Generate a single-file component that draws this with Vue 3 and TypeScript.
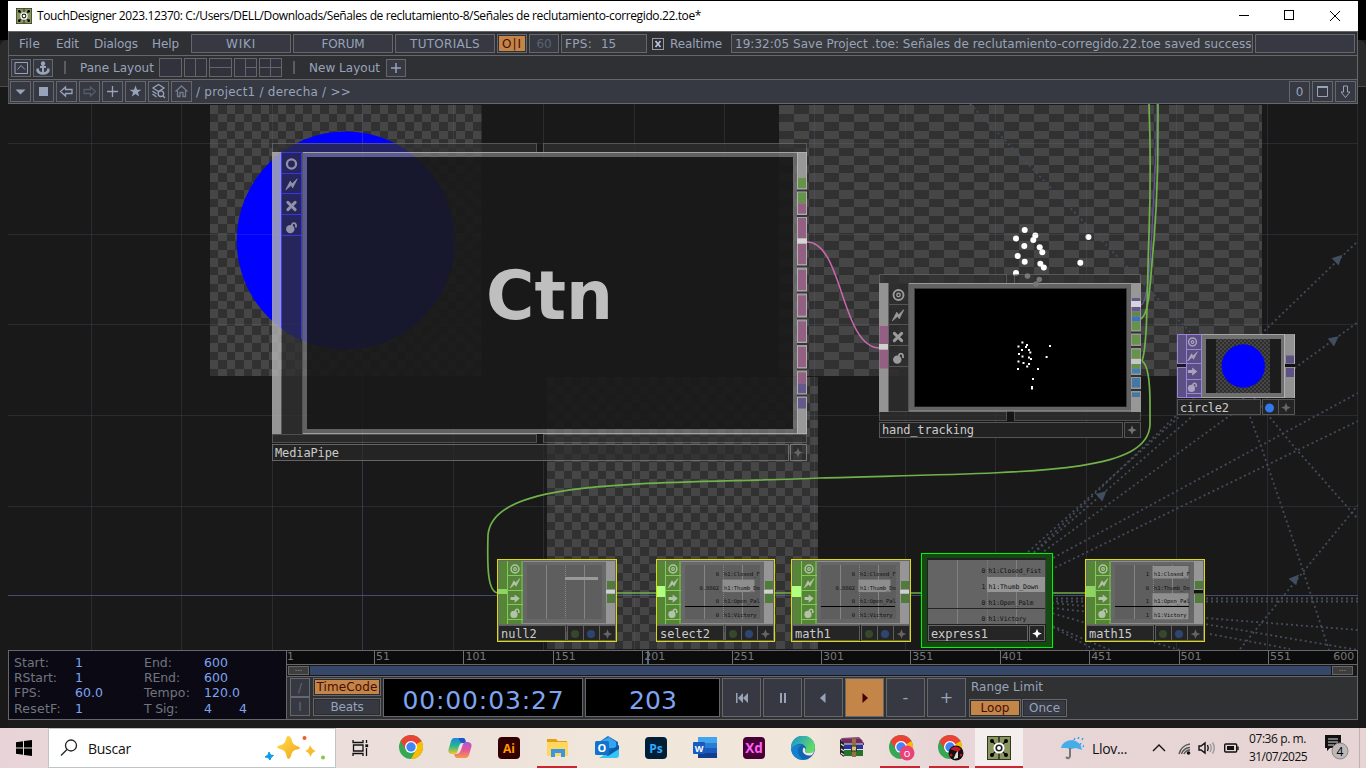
<script setup lang="ts">
interface Checker { id: string; x: number; y: number; w: number; h: number; pw: number; cw: number }
interface Row { v: string; label: string; hi: boolean }
interface Chop { name: string; x: number; rows: Row[]; hw: number; socket: string; hot: boolean }

const vFit = {
  mounted(el: HTMLElement, binding: { value: number }) {
    const range = document.createRange()
    range.selectNodeContents(el)
    const width = range.getBoundingClientRect().width
    const count = (el.textContent || '').length
    if (count > 0) el.style.letterSpacing = `${(binding.value - width) / count}px`
  },
}

const menus = [
  { t: 'File', w: 21, c: 37 }, { t: 'Edit', w: 23, c: 38 },
  { t: 'Dialogs', w: 44, c: 58 }, { t: 'Help', w: 27, c: 39 },
]
const links = [{ t: 'WIKI', w: 30 }, { t: 'FORUM', w: 43 }, { t: 'TUTORIALS', w: 70 }]
const layouts = [
  '', 'M11.5 0V19', 'M0 9.5H23', 'M11.5 0V19M11.5 9.5H23', 'M11.5 0V19M0 9.5H23',
]
const tools = [
  { d: 'M5 8H15L10 13Z', fill: true },
  { d: 'M5.5 5.500H14.500V14.500H5.500Z', fill: true },
  { d: 'M4 10L9 5.500V8H15.500V12H9V14.500Z', fill: false },
  { d: 'M16 10L11 5.500V8H4.500V12H11V14.500Z', fill: false, dim: true },
  { d: 'M10 4.500V15.500M4.500 10H15.500', fill: false },
  { d: 'M10 4L11.500 8.200H16L12.400 10.800L13.700 15L10 12.500L6.300 15L7.600 10.800L4 8.200H8.500Z', fill: true },
  { d: 'M10 3L15.500 6.500L10 10L4.500 6.500ZM4 9.500L8 12.500M4 12.500L8 15.500M16.500 16.500L14.300 14.300M15.200 12.200A2.800 2.800 0 1 1 9.600 12.200A2.800 2.800 0 1 1 15.200 12.200', fill: false },
  { d: 'M4 10L10 4.500L16 10M6 9V15H8.500V11H11.500V15H14V9', fill: false, mid: true },
]
const checkers: Checker[] = [
  { id: 'ck1', x: 210, y: 105, w: 271.500, h: 271, pw: 17, cw: 8 },
  { id: 'ck2', x: 779, y: 105, w: 483, h: 271, pw: 30, cw: 15 },
  { id: 'ck3', x: 547, y: 377, w: 271, h: 272, pw: 17, cw: 8 },
]
const vLines = [91.5, 181.5, 272.5, 453.5, 543.5, 634.5, 724.5, 814.5, 905.5, 995.5, 1086.5, 1176.5, 1267.5, 1357.5]
const hLines = [143.5, 234.5, 324.5, 415.5, 506.5]
const dotted = [
  'M970 104L1192 334', 'M1030 556L1358 241', 'M1032 560L1358 322', 'M1040 565L1358 393', 'M1046 572L1358 421',
  'M1028 552L1180 416', 'M1034 553L1195 414', 'M1243 398L1262 449L1293 540L1329 650', 'M1254 398L1296 449L1358 519',
  'M1240 649L1358 505', 'M1046 598.500H1358', 'M1046 601.500H1358', 'M1052 603L1205 618L1358 630',
  'M1052 608L1205 624L1358 650', 'M1048 612L1180 650', 'M1048 624L1110 650', 'M1040 620L1095 650', 'M1000 624L1030 650',
  'M1210 634L1290 649',
]
const arrows = ['translate(1338 259) rotate(-44)', 'translate(1334 340) rotate(-38)', 'translate(1102 495) rotate(-42)', 'translate(1295 579) rotate(-50)']
const mpSockets = [
  { y: 178, h: 10, c: '#66934a' }, { y: 192.5, h: 11, c: '#66934a' }, { y: 203.5, h: 10, c: '#935f83' },
  { y: 218, h: 20, c: '#935f83' }, { y: 244, h: 20, c: '#935f83' }, { y: 270, h: 20, c: '#935f83' },
  { y: 295.5, h: 20, c: '#935f83' }, { y: 321.5, h: 20, c: '#935f83' }, { y: 347, h: 20, c: '#935f83' },
  { y: 372.5, h: 11, c: '#935f83' }, { y: 383.5, h: 10, c: '#65598c' }, { y: 398, h: 10.500, c: '#65598c' },
]
const mpGaps = [188.5, 214, 264.5, 290.5, 316.5, 342, 367.5, 393.5]
const htSockets = [
  { y: 298, h: 3, c: '#65598c' }, { y: 307, h: 4.500, c: '#65598c' }, { y: 312, h: 4.500, c: '#5e8a43' },
  { y: 316.5, h: 5, c: '#4070c0' }, { y: 321.5, h: 8.500, c: '#66934a' }, { y: 335, h: 9.500, c: '#66934a' },
  { y: 349.5, h: 9, c: '#66934a' }, { y: 364, h: 4.500, c: '#66934a' }, { y: 368.5, h: 5, c: '#4580b0' },
  { y: 378, h: 9.500, c: '#4577a5' }, { y: 392.5, h: 4.500, c: '#4577a5' },
]
const htGaps = [331, 345.5, 374.5, 388.5]
const bigDots = [
  [1024.7, 230], [1016, 238.5], [1035.3, 235.5], [1033.3, 240], [1024.3, 246], [1017.7, 256], [1039.7, 247.3], [1042.3, 252.3],
  [1024.7, 261.7], [1040.3, 263.7], [1043.8, 267.5], [1016, 273], [1088.5, 237], [1080.3, 262.8],
]
const dimDots = [[1027.5, 276], [1039.3, 279.5], [1036, 284]]
const smallDots = [
  [1022.4, 342.5], [1018.5, 346.5], [1027, 345], [1026, 347], [1022, 350], [1019, 354], [1029, 350], [1030.3, 352.5],
  [1022.5, 356.5], [1029, 357.5], [1031, 359], [1018.5, 361.5], [1023.5, 363], [1029, 364], [1027.2, 366.5], [1018, 369],
  [1050, 346], [1046.6, 357], [1038, 369], [1033, 379], [1032, 387], [1032, 388.5],
]
const mk = (vals: string[], hi: number[]): Row[] =>
  ['h1:Closed_F', 'h1:Thumb_Do', 'h1:Open_Pal', 'h1:Victory'].map((label, i) => ({ v: vals[i], label, hi: hi.includes(i) }))
const chops: Chop[] = [
  { name: 'null2', x: 497, rows: [], hw: 0, socket: '#8ed461', hot: false },
  { name: 'select2', x: 655, rows: mk(['0', '0.8802', '0', '0'], [1]), hw: 32, socket: '#b0ff80', hot: true },
  { name: 'math1', x: 791, rows: mk(['0', '0.8802', '0', '0'], [1]), hw: 32, socket: '#b0ff80', hot: true },
  { name: 'math15', x: 1085, rows: mk(['1', '0', '1', '1'], [0, 2, 3]), hw: 36, socket: '#8ed461', hot: false },
]
const exRows = [
  { v: '0', label: 'h1:Closed_Fist', w: 53 }, { v: '1', label: 'h1:Thumb_Down', w: 50 },
  { v: '0', label: 'h1:Open_Palm', w: 45 }, { v: '0', label: 'h1:Victory', w: 38 },
]
const params = [
  ['Start:', 35, '1', 6, 'End:', 28, '600', 24, ''],
  ['RStart:', 43, '1', 6, 'REnd:', 36, '600', 24, ''],
  ['FPS:', 27, '60.0', 28, 'Tempo:', 46, '120.0', 36, ''],
  ['ResetF:', 47, '1', 6, 'T Sig:', 34, '4', 8, '4'],
] as [string, number, string, number, string, number, string, number, string][]
const ticks = ['1', '51', '101', '151', '201', '251', '301', '351', '401', '451', '501', '551']
const apps = ['chrome', 'copilot', 'ai', 'folder', 'outlook', 'ps', 'word', 'xd', 'edge', 'rar', 'chromeO', 'chromeR', 'td']
const running = ['folder', 'chromeO', 'chromeR', 'td']
</script>

<template>
  <div class="screen">
    <svg class="defs" width="0" height="0">
      <symbol id="td" viewBox="0 0 24 24">
        <rect width="24" height="24" fill="#33371f" /><rect x="1" y="1" width="22" height="22" fill="#8a9660" />
        <path d="M4 4L20 20M20 4L4 20M12 1V23" stroke="#111" stroke-width="1.2" />
        <circle cx="5" cy="5" r="2" /><circle cx="19" cy="5" r="2" /><circle cx="5" cy="19" r="2" /><circle cx="19" cy="19" r="2" />
        <circle cx="12" cy="12" r="5.500" fill="#fff" /><circle cx="12" cy="12" r="2.800" fill="none" stroke="#222" stroke-width="1.600" />
      </symbol>
      <symbol id="eye" viewBox="0 0 16 16"><circle cx="8" cy="8" r="5.700" fill="none" stroke="currentColor" stroke-width="2.200" /><circle cx="8" cy="8" r="2" fill="none" stroke="currentColor" stroke-width="1.600" /></symbol>
      <symbol id="ring" viewBox="0 0 16 16"><circle cx="8" cy="8" r="5.600" fill="none" stroke="currentColor" stroke-width="2.800" /></symbol>
      <symbol id="bolt" viewBox="0 0 16 16"><path d="M1 14.500L6.500 4L8.800 7.200L15 1L9.500 12L7.500 9Z" fill="currentColor" stroke="currentColor" /></symbol>
      <symbol id="cross" viewBox="0 0 16 16"><path d="M3.500 3.500L12.500 12.500M12.500 3.500L3.500 12.500" stroke="currentColor" stroke-width="3.600" stroke-linecap="round" /></symbol>
      <symbol id="arrow" viewBox="0 0 16 16"><path d="M1.500 5.800H7.500V2L15 8L7.500 14V10.200H1.500Z" fill="currentColor" /></symbol>
      <symbol id="lock" viewBox="0 0 16 16"><circle cx="6.500" cy="10" r="5.200" fill="currentColor" /><path d="M8.500 6V4.500A2.600 2.600 0 0 1 13.500 4.500V8" fill="none" stroke="currentColor" stroke-width="2.200" /></symbol>
      <symbol id="spark" viewBox="0 0 16 16"><path d="M8 1L10 6L15 8L10 10L8 15L6 10L1 8L6 6Z" fill="currentColor" /></symbol>
    </svg>

    <div class="desk">
      <div class="backdrop"></div>
      <div class="window">
        <header class="title">
          <svg width="16" height="16"><use href="#td" /></svg>
          <span v-fit="664" class="caption">TouchDesigner 2023.12370: C:/Users/DELL/Downloads/Señales de reclutamiento-8/Señales de reclutamiento-corregido.22.toe*</span>
          <svg class="wbtns" width="130" height="30" fill="none" stroke="#000"><path d="M11 14.500H21M102 10L112 20M112 10L102 20" /><rect x="56.500" y="9.500" width="9" height="9" /></svg>
        </header>

        <div class="bar row1">
          <div v-for="m in menus" :key="m.t" class="menu" :style="{ width: m.c + 'px' }"><span v-fit="m.w">{{ m.t }}</span></div>
          <div v-for="l in links" :key="l.t" class="box link"><span v-fit="l.w">{{ l.t }}</span></div>
          <div class="box oi"><span v-fit="20">O|I</span></div>
          <div class="box sixty"><span v-fit="15">60</span></div>
          <div class="box fps"><span v-fit="27">FPS:</span><span v-fit="15">15</span></div>
          <div class="check"><svg width="12" height="12"><rect x=".5" y=".5" width="11" height="11" fill="#2a2d35" stroke="#9a9a9a" /><path d="M3.500 3L8.500 9M8.500 3L3.500 9" stroke="#b9c3d8" stroke-width="1.800" /></svg><span v-fit="52">Realtime</span></div>
          <div class="box msg"><span v-fit="516.500">19:32:05 Save Project .toe: Señales de reclutamiento-corregido.22.toe saved success</span></div>
          <div class="box last"></div>
        </div>

        <div class="bar row2">
          <div class="box sq"><svg width="18" height="16" fill="none" stroke="#98a3ba"><path d="M3 2.500H15.500V13.500H3ZM5.500 9.500L9 5.500L13 9.500" /></svg></div>
          <div class="box sq"><svg width="18" height="16" fill="none" stroke="#98a3ba" stroke-width="2"><circle cx="9" cy="3.500" r="1.200" fill="#98a3ba" /><path d="M9 5V13M6 7H12M2.500 9.500H5M13 9.500H15.500" /><path d="M3.500 10C4.500 14.500 13.500 14.500 14.500 10" stroke-width="2.800" /></svg></div>
          <i class="sep s1"></i><span v-fit="74" class="pane">Pane Layout</span>
          <svg v-for="(d, i) in layouts" :key="i" class="lay" width="23" height="19" fill="none" stroke="#63656b"><rect x=".5" y=".5" width="22" height="18" fill="#30333b" /><path :d="d" /></svg>
          <i class="sep s2"></i><span v-fit="71" class="newl">New Layout</span>
          <div class="box sq"><svg width="18" height="16" stroke="#98a3ba" stroke-width="1.500"><path d="M9 3V13M4 8H14" /></svg></div>
        </div>

        <div class="bar row3">
          <div v-for="(t, i) in tools" :key="i" class="box tool">
            <svg width="19" height="19" viewBox=".5 .5 19 19" :fill="t.fill ? '#98a3ba' : 'none'" :stroke="t.fill ? 'none' : t.dim ? '#555b69' : t.mid ? '#747d90' : '#98a3ba'" stroke-width="1.300"><path :d="t.d" /></svg>
          </div>
          <span v-fit="155" class="path">/ project1 / derecha / &gt;&gt;</span>
          <div class="box tool"><span>0</span></div>
          <div class="box tool"><svg width="19" height="19" fill="none" stroke="#98a3ba"><path d="M4.500 5V14.500H14.500V5M4 5.500H15" /><path d="M4 5H15" stroke-width="2" /></svg></div>
          <div class="box tool"><svg width="19" height="19" fill="none" stroke="#98a3ba"><path d="M7.500 4H11.500V10H14L9.500 15.500L5 10H7.500Z" /></svg></div>
        </div>

        <svg class="network" width="1350" height="546" viewBox="8 104 1350 546">
          <defs>
            <pattern v-for="c in checkers" :id="c.id" :key="c.id" patternUnits="userSpaceOnUse" :x="c.x" :y="c.y" :width="c.pw" height="17">
              <g shape-rendering="crispEdges"><rect :width="c.pw" height="17" fill="#313131" /><rect :width="c.cw" height="9" fill="#464646" /><rect :x="c.cw" y="9" :width="c.pw - c.cw" height="8" fill="#464646" /></g>
            </pattern>
            <pattern id="tiny" patternUnits="userSpaceOnUse" width="4" height="4"><rect width="4" height="4" fill="#2e2e2e" /><path d="M0 0H2V2H0ZM2 2H4V4H2Z" fill="#464646" /></pattern>
            <clipPath id="chopClip"><rect x="27" y="563" width="78" height="60" /></clipPath>
          </defs>
          <rect x="8" y="104" width="1350" height="546" fill="#191919" />
          <rect v-for="c in checkers" :key="c.id" :x="c.x" :y="c.y" :width="c.w" :height="c.h" :fill="`url(#${c.id})`" />
          <circle cx="345.700" cy="240.500" r="109" fill="#00f" />
          <circle v-for="d in bigDots" :key="d.join()" :cx="d[0]" :cy="d[1]" r="3" fill="#fff" />
          <g stroke="#6d6d90" stroke-opacity=".2">
            <path v-for="x in vLines" :key="x" :d="`M${x} 104V650`" /><path v-for="y in hLines" :key="y" :d="`M8 ${y}H1358`" />
          </g>
          <path d="M362.500 104V650" stroke="#6262a0" stroke-opacity=".4" /><path d="M8 595.500H1358" stroke="#5d5da0" stroke-opacity=".7" />

          <g fill="none" stroke="#434c5b" stroke-width="1.800" stroke-dasharray="2 3"><path v-for="d in dotted" :key="d" :d="d" /></g>
          <path v-for="a in arrows" :key="a" d="M-4 -5L6 0L-4 5Z" :transform="a" fill="#414e5f" />

          <path d="M807 242C843 242 841 348 880 348" fill="none" stroke="#cb68ad" stroke-width="1.500" />
          <path d="M1141 305C1147 303 1150 275 1152.500 220C1155 165 1157 150 1157 104" fill="none" stroke="#65539c" stroke-width="1.300" />
          <g fill="none" stroke="#70b14a" stroke-width="1.700">
            <path d="M1141 319C1150 313 1150 280 1154 240C1158 190 1158 150 1158 104" />
            <path d="M1142 361C1148 345 1147 280 1149 235C1150.500 190 1150 130 1149 104" />
            <path d="M1142 361C1147 364 1150 380 1150 404V425C1147 475 1030 472 820 478C650 485 493 477 488 535C487 570 488 592 498 593" />
            <path d="M616 593H657M774 593H792M910 593H928M1045 593H1086" />
          </g>

          <!-- MediaPipe -->
          <g class="node">
            <g fill="#303030" fill-opacity=".75" stroke="#888" stroke-opacity=".45">
              <rect x="272.500" y="143.500" width="264" height="9" /><rect x="543.500" y="143.500" width="263" height="9" />
              <rect x="272.500" y="434.500" width="264" height="8" /><rect x="543.500" y="434.500" width="263" height="8" />
            </g>
            <rect x="282" y="152" width="20" height="282" fill="#303030" opacity=".79" />
            <path fill="#757575" fill-opacity=".79" fill-rule="evenodd" d="M302 152H797V434H302ZM307 157V429H793V157Z" />
            <rect x="307" y="157" width="486" height="272" fill="#191919" opacity=".91" />
            <rect x="272" y="152" width="9.500" height="282" fill="#b4b4b4" opacity=".8" />
            <rect x="797" y="152" width="10" height="282" fill="#989898" />
            <path d="M302 152.500H807M302 433.500H807M797.500 152V434M806.500 152V434" stroke="#bbb" stroke-opacity=".7" />
            <path d="M302.500 152V434" stroke="#555" />
            <path d="M282 173.500H301M282 193.500H301M282 214.500H301M282 235.500H301M281.500 152.500H301.500M281.500 153V328M301.500 153V339" stroke="#3939ff" stroke-opacity=".85" />
            <rect v-for="s in mpSockets" :key="s.y" x="798" :y="s.y" width="8" :height="s.h" :fill="s.c" />
            <g v-for="g in mpGaps" :key="g"><rect x="797" :y="g" width="10" height="3.500" fill="#ababab" /><rect x="797" :y="g + 1" width="10" height="2" fill="#383838" /></g>
            <rect x="797" y="238.500" width="10" height="5" fill="#d5d5d5" />
            <g color="#9090aa"><use href="#ring" x="285" y="157.500" width="13" height="13" /><use href="#bolt" x="285" y="178" width="13" height="13" /><use href="#cross" x="285" y="199.500" width="13" height="13" /><use href="#lock" x="285" y="220.500" width="13" height="14" /></g>
            <text x="486" y="319" class="big" textLength="127" lengthAdjust="spacingAndGlyphs">Ctn</text>
            <rect x="272.500" y="444.500" width="516" height="16" fill="#2b2b2b" fill-opacity=".65" stroke="#777" stroke-opacity=".8" /><rect x="790.500" y="444.500" width="16" height="16" fill="#2b2b2b" fill-opacity=".5" stroke="#777" />
            <use href="#spark" x="792.500" y="447" width="11" height="11" color="#666" />
            <text x="275" y="457" class="mono" textLength="64">MediaPipe</text>
          </g>

          <!-- hand_tracking -->
          <g>
            <g fill="#303030" fill-opacity=".75" stroke="#888" stroke-opacity=".45">
              <rect x="879.500" y="274.500" width="127" height="9" /><rect x="1014.500" y="274.500" width="126" height="9" />
              <rect x="879.500" y="411.500" width="127" height="9" /><rect x="1014.500" y="411.500" width="126" height="9" />
            </g>
            <rect x="1007" y="412" width="7" height="9" fill="#141414" />
            <rect x="888" y="283" width="21" height="128" fill="#2c2c2c" opacity=".9" />
            <rect x="909" y="283" width="222" height="128" fill="#636363" />
            <path d="M909 283.500H1141M909 411H1141" stroke="#999" />
            <rect x="914" y="288" width="213" height="119" fill="#3a3a3a" /><rect x="915" y="289" width="211" height="117.500" />
            <rect x="879" y="283" width="9.500" height="129" fill="#939393" /><rect x="879.500" y="326" width="8.500" height="18" fill="#935f83" /><rect x="879.500" y="350" width="8.500" height="18.500" fill="#935f83" /><rect x="879" y="344" width="9" height="5.500" fill="#d0d0d0" />
            <rect x="1131" y="283" width="10" height="129" fill="#979797" />
            <rect x="1131" y="301" width="10" height="6" fill="#d8d4de" /><rect x="1131" y="359" width="10" height="5" fill="#c7c7c7" />
            <rect v-for="s in htSockets" :key="s.y" x="1132" :y="s.y" width="8" :height="s.h" :fill="s.c" />
            <rect v-for="g in htGaps" :key="g" x="1131" :y="g + .5" width="10" height="2" fill="#333" />
            <circle v-for="d in dimDots" :key="d[0]" :cx="d[0]" :cy="d[1]" r="2.800" fill="#777" />
            <rect v-for="d in smallDots" :key="d.join()" :x="d[0] - 1" :y="d[1] - 1" width="2" height="2" fill="#fff" />
            <path d="M888 304.500H909M888 324.500H909M888 345.500H909M888 366.500H909M908.500 283V411" stroke="#555" />
            <g color="#9b9b9b"><use href="#eye" x="891.500" y="288" width="14" height="14" /><use href="#bolt" x="891.500" y="309" width="13" height="13" /><use href="#cross" x="891.500" y="330.500" width="13" height="13" /><use href="#lock" x="892" y="351" width="13" height="14" /></g>
            <rect x="879.500" y="422.500" width="243" height="15" fill="#222" stroke="#555" /><rect x="1124.500" y="422.500" width="16" height="15" fill="#222" stroke="#555" />
            <use href="#spark" x="1126.500" y="424.500" width="11" height="11" color="#707070" />
            <text x="882" y="434" class="mono" textLength="92">hand_tracking</text>
          </g>

          <!-- circle2 -->
          <g>
            <rect x="1177" y="334" width="118" height="64" fill="#707070" /><path d="M1201 334.500H1295M1201 397.500H1295" stroke="#a5a5a5" />
            <rect x="1206" y="339" width="75" height="54" fill="#1c1c1c" /><rect x="1216" y="339" width="54" height="54" fill="url(#tiny)" /><circle cx="1243.300" cy="366" r="21.700" fill="#00f" />
            <rect x="1285" y="334" width="10" height="64" fill="#929292" /><path d="M1284.500 334V398M1294.500 334V398" stroke="#b0b0b0" />
            <rect x="1286" y="355.500" width="8" height="8" fill="#5e5284" /><rect x="1286" y="368" width="8" height="9" fill="#5e5284" /><rect x="1285" y="364" width="10" height="3" fill="#111" />
            <rect x="1177" y="334" width="24" height="64" fill="#5b4f83" />
            <path d="M1177.500 334.500H1201.500V397.500H1177.500ZM1186.500 334V398M1186 349.500H1201M1186 363.500H1201M1186 379.500H1201M1186 393.500H1201" stroke="#9a86d6" fill="none" /><path d="M1177 363.500H1186M1177 367.500H1186" stroke="#9a86d6" /><rect x="1177" y="364" width="9" height="3" fill="#1a1a1a" />
            <g color="#aaa3bd"><use href="#eye" x="1187" y="336.500" width="11" height="11" /><use href="#bolt" x="1187" y="351" width="11" height="11" /><use href="#arrow" x="1187" y="366" width="11" height="11" /><use href="#lock" x="1187" y="381.500" width="11" height="11" /></g>
            <g fill="#242424" stroke="#555"><rect x="1177.500" y="399.500" width="83" height="15" /><rect x="1262.500" y="399.500" width="16" height="15" /><rect x="1278.500" y="399.500" width="16" height="15" /></g>
            <circle cx="1269.500" cy="408" r="4.500" fill="#3478ee" /><use href="#spark" x="1280.500" y="402" width="11" height="11" color="#666" />
            <text x="1180" y="412" class="mono" textLength="49">circle2</text>
          </g>

          <g v-for="n in chops" :key="n.name" :transform="`translate(${n.x} 0)`">
            <rect x="1" y="560" width="118" height="65" fill="#6b6b6b" fill-opacity=".94" />
            <rect x="30" y="565" width="75" height="54" fill="#5e5e5e" /><path d="M49.500 565V619M87.500 565V619" stroke="#858585" /><path d="M68.500 565V619" stroke="#858585" stroke-dasharray="1 1" />
            <rect v-if="!n.rows.length" x="68" y="577" width="33" height="3" fill="#999" />
            <g clip-path="url(#chopClip)">
              <g v-for="(r, i) in n.rows" :key="i">
                <rect v-if="r.hi" x="67.500" :y="566 + i * 13.600" :width="n.hw" height="12.500" fill="#8e8e8e" />
                <text x="64" :y="576 + i * 13.600" class="micro" text-anchor="end" :textLength="r.v.length * 3.250">{{ r.v }}</text>
                <text x="69" :y="576 + i * 13.600" class="micro" :textLength="r.label.length * 3.250">{{ r.label }}</text>
              </g>
              <path v-if="n.rows.length" d="M30 606.500H104" stroke="#000" />
            </g>
            <path d="M2 561.500H118M26 623.500H118" stroke="#8c8c8c" />
            <rect x="109" y="561" width="9" height="63" fill="#969696" /><rect x="110" y="581" width="8" height="8" fill="#517b3a" /><rect x="110" y="594" width="8" height="9" fill="#517b3a" /><rect x="109" y="590" width="9" height="3.500" :fill="n.name === 'math15' ? '#111' : '#d0d0d0'" />
            <rect x="2" y="561" width="24" height="63" fill="#568537" />
            <path d="M10.500 561V624M25 561V624M11 575.500H26M11 590.500H26M11 604.500H26M11 619.500H26" stroke="#84c75b" />
            <rect x="1" :y="n.hot || n.name === 'math15' ? 586 : 589" width="9" :height="n.hot || n.name === 'math15' ? 11 : 5" :fill="n.socket" />
            <g color="#b3c3a8"><use href="#eye" x="12.500" y="563.500" width="11" height="11" /><use href="#bolt" x="12.500" y="578" width="11" height="11" /><use href="#arrow" x="12.500" y="593" width="11" height="11" /><use href="#lock" x="12.500" y="607.500" width="11" height="11" /></g>
            <g fill="#252525" stroke="#5e5e5e"><rect x="1.500" y="625.500" width="67" height="15" /><rect x="70.500" y="625.500" width="16" height="15" /><rect x="86.500" y="625.500" width="16" height="15" /><rect x="102.500" y="625.500" width="16" height="15" /></g>
            <circle cx="78" cy="634" r="4" fill="#37472c" /><circle cx="94" cy="634" r="4" fill="#2e466f" /><use href="#spark" x="105" y="628.500" width="11" height="11" color="#656565" />
            <rect :x="n.name === 'select2' ? 1.500 : .5" y="559.500" :width="n.name === 'select2' ? 118 : 119" height="82" fill="none" stroke="#dedb0b" />
            <text :x="n.name === 'select2' ? 5 : 4" y="638" class="mono" :textLength="n.name.length * 7.150">{{ n.name }}</text>
          </g>

          <!-- express1 -->
          <g>
            <rect x="921.500" y="553.500" width="131" height="94" fill="#144a12" stroke="#00f500" />
            <rect x="927" y="558" width="119" height="84" fill="#202020" /><rect x="928" y="560" width="117.500" height="64" fill="#646464" />
            <path d="M957.500 560V624M1016.500 560V624" stroke="#808080" /><path d="M987.500 560V624" stroke="#808080" stroke-dasharray="1 1" />
            <rect x="987" y="577" width="58" height="15" fill="#969696" />
            <g v-for="(r, i) in exRows" :key="i"><text x="985.500" :y="573 + i * 16" class="micro ex" text-anchor="end">{{ r.v }}</text><text x="988.500" :y="573 + i * 16" class="micro ex" :textLength="r.w">{{ r.label }}</text></g>
            <path d="M928 608.500H1045" stroke="#252525" />
            <rect x="928.500" y="625.500" width="99" height="15" fill="#252525" stroke="#666" /><rect x="1029.500" y="625.500" width="15" height="15" fill="#252525" stroke="#666" />
            <use href="#spark" x="1031.500" y="628" width="11" height="11" color="#fff" /><text x="931" y="638" class="mono" textLength="57">express1</text>
          </g>
        </svg>

        <footer class="timeline">
          <div class="params">
            <div v-for="p in params" :key="p[0]" class="prow">
              <label><span v-fit="p[1]">{{ p[0] }}</span></label><b><span v-fit="p[3]">{{ p[2] }}</span></b>
              <label class="l2"><span v-fit="p[5]">{{ p[4] }}</span></label><b class="b2"><span v-fit="p[7]">{{ p[6] }}</span></b><b class="b3">{{ p[8] }}</b>
            </div>
          </div>
          <div class="transport">
            <div class="ruler"><span v-for="t in ticks" :key="t" class="tick" :class="{ now: t === '201' }">{{ t }}</span><span class="end">600</span></div>
            <div class="range"><i>...</i><div class="fill"></div><i>...</i></div>
            <div class="controls">
              <div class="slashes"><div>/</div><div>I</div></div>
              <div class="modes"><div class="mode on"><span v-fit="61">TimeCode</span></div><div class="mode"><span v-fit="33">Beats</span></div></div>
              <div class="lcd wide"><span v-fit="162">00:00:03:27</span></div>
              <div class="lcd"><span v-fit="48">203</span></div>
              <div class="tb"><svg width="14" height="12" fill="#98a3ba"><path d="M1 1H2.500V11H1ZM8 1V11L3 6ZM13 1V11L8 6Z" /></svg></div>
              <div class="tb"><svg width="8" height="12" fill="#98a3ba"><path d="M1 1H3V11H1ZM5 1H7V11H5Z" /></svg></div>
              <div class="tb"><svg width="10" height="12" fill="#98a3ba"><path d="M6.500 1V11L1 6Z" /></svg></div>
              <div class="tb on"><svg width="8" height="12" fill="#400"><path d="M1.500 1V11L7 6Z" /></svg></div>
              <div class="tb">-</div><div class="tb">+</div>
              <div class="limit"><span v-fit="72">Range Limit</span><div class="lrow"><div class="mode loop on"><span v-fit="29">Loop</span></div><div class="mode once"><span v-fit="31">Once</span></div></div></div>
            </div>
          </div>
        </footer>
      </div>
      <div class="backdrop right"></div>
    </div>

    <div class="taskbar">
      <div class="start"><svg width="16" height="16"><path d="M0 2.300L7 1.200V7.500H0ZM8 1.100L16 0V7.500H8ZM0 8.500H7V14.800L0 13.700ZM8 8.500H16V16L8 14.900Z" /></svg></div>
      <div class="search">
        <svg width="18" height="18" fill="none" stroke="#222" stroke-width="1.300"><circle cx="11" cy="6.500" r="5.500" /><path d="M7 10.500L1 16.500" /></svg>
        <span v-fit="43">Buscar</span>
        <svg class="stars" width="62" height="26"><defs><linearGradient id="gold" x2="1" y2="1"><stop stop-color="#ffdf4a" /><stop offset="1" stop-color="#f3a31c" /></linearGradient></defs>
          <path d="M24 1Q27 1 28 6Q29 10 33 11Q36 12 36 13Q36 14 31 15Q28 16 27 21Q26 24 24.500 24Q23 24 22 19Q21 15 16 14Q13 13 13 12Q13 11 17 10Q21 9 22 4Q22.500 1 24 1Z" fill="url(#gold)" /><path d="M46 10Q48 15 52 16Q48 17 46.500 22Q45 17 41 16Q45 15 46 10Z" fill="#f8bd2b" /><path d="M5 17L6.500 20L9.500 20.500L7 22.500L6 25L4 22.500L1 22L4 20Z" fill="#0c9ee8" stroke="#0c9ee8" /><circle cx="40.500" cy="3" r="2" fill="#ef5a2a" /><circle cx="59" cy="22.500" r="2" fill="#8bc63e" /></svg>
      </div>
      <div class="taskview"><svg width="18" height="18" fill="none" stroke="#111" stroke-width="1.300"><path d="M1 1V3.500H11V1M1.500 6H11V12H1.500ZM1 17V14.500H11V17M14.500 1V4M14.500 9V17" /><rect x="14" y="6" width="1.500" height="1.500" fill="#111" /></svg></div>
      <div v-for="a in apps" :key="a" class="app" :class="[{ run: running.includes(a) }, a]">
        <svg v-if="a.startsWith('chrome')" width="28" height="28" viewBox="0 0 28 28">
          <circle cx="14" cy="13" r="12" fill="#34a853" /><path d="M14 13L3.600 7A12 12 0 0 1 24.400 7Z" fill="#ea4335" /><path d="M14 13L24.400 7A12 12 0 0 1 14 25L19 16Z" fill="#fbbc04" /><path d="M3.600 7L9 16L14 7Z" fill="#ea4335" /><path d="M24.400 7H14V13Z" fill="#ea4335" />
          <circle cx="14" cy="13" r="6" fill="#fff" /><circle cx="14" cy="13" r="4.700" fill="#4285f4" />
          <g v-if="a === 'chromeO'"><circle cx="20" cy="19" r="7.500" fill="#ec407a" /><text x="20" y="22.500" class="badge">o</text></g>
          <g v-if="a === 'chromeR'"><circle cx="20" cy="19" r="7.500" fill="#111" /><path d="M14 15Q20 10 25 15L22 18Z" fill="#c41925" /><path d="M17.500 25L20 19L22 17V24Z" fill="#ddd" /><circle cx="15" cy="21" r="1.500" fill="#b31622" /><circle cx="25" cy="21" r="1.300" fill="#b31622" /></g>
        </svg>
        <svg v-else-if="a === 'copilot'" width="24" height="24"><defs><linearGradient id="cp" x2="0" y2="1"><stop stop-color="#1787e0" /><stop offset=".5" stop-color="#29b68c" /><stop offset="1" stop-color="#f4c52c" /></linearGradient><linearGradient id="cq" x2="0" y2="1"><stop stop-color="#a55ad8" /><stop offset=".5" stop-color="#e85596" /><stop offset="1" stop-color="#f59a48" /></linearGradient></defs><path d="M6 2H15Q17 2 17.500 5L18 7H14Q12 7 11 10L9 17Q8 18 5 18H3Q-1 17 1 12L3 5Q4 2 6 2Z" fill="url(#cp)" /><path d="M11 2H15Q17 2 17.500 5L18 7H14Q11 6 11 2Z" fill="#1d55c9" /><path d="M18 6H20Q25 7 23 12L21 19Q20 22 18 22H9Q7 22 6.500 19L6 18H9Q12 17 13 14L15 8Q16 6 18 6Z" fill="url(#cq)" /></svg>
        <svg v-else-if="a === 'ai' || a === 'ps' || a === 'xd'" width="24" height="24"><rect x="1" y="1" width="22" height="22" rx="4" :fill="a === 'ai' ? '#330000' : a === 'ps' ? '#001e36' : '#470137'" /><text x="12" y="16.500" class="adobe" :class="{ xl: a === 'xd' }" :fill="a === 'ai' ? '#ff9a00' : a === 'ps' ? '#31a8ff' : '#ff61f6'">{{ a[0].toUpperCase() + a[1] }}</text></svg>
        <svg v-else-if="a === 'folder'" width="24" height="24"><path d="M1 3H10L12 5H21V9H1Z" fill="#e2a011" /><rect x="1" y="6" width="21" height="14" fill="#ffd75e" /><path d="M5 21V13H19V21H15V17H9V21Z" fill="#3c96df" /></svg>
        <svg v-else-if="a === 'outlook'" width="26" height="26"><path d="M5 7L14 1L24 7V12L14 18L5 13Z" fill="#1169c0" /><path d="M7 6L15 2L22 7V13H7Z" fill="#36a5ed" /><path d="M5 23L25 11V20Q25 23 22 23Z" fill="#35c5f4" /><path d="M25 10L10 19L14 21L25 14Z" fill="#0b58a8" /><rect x="1" y="6" width="14" height="14" rx="1.500" fill="#1272cc" /><text x="8" y="17" class="ms">O</text></svg>
        <svg v-else-if="a === 'word'" width="26" height="24"><rect x="6" y="1" width="19" height="6" fill="#41a5ee" /><rect x="6" y="7" width="19" height="5" fill="#2b7cd3" /><rect x="6" y="12" width="19" height="5" fill="#185abd" /><rect x="6" y="17" width="19" height="5" fill="#103f91" /><rect x="1" y="6" width="12" height="12" rx="1" fill="#185abd" /><text x="7" y="15.500" class="ms w">W</text></svg>
        <svg v-else-if="a === 'edge'" width="24" height="24"><defs><linearGradient id="eg" x2="1" y2=".5"><stop stop-color="#168ddb" /><stop offset="1" stop-color="#61dc65" /></linearGradient></defs><circle cx="12" cy="12" r="12" fill="#1064b4" /><path d="M0 12A12 12 0 0 1 24 11Q24 17 18 17Q14 17 14 15Q16 13 14 10Q10 6 5 9Q1 11 0 15Z" fill="url(#eg)" /><path d="M14 15Q14 17 18 17Q21.500 17 23.300 14.800Q22.500 17.500 21 19Q17 20.500 13.500 18Q10.500 15.500 12.500 11.500Q15.500 12.500 14 15Z" fill="#f0e6dc" /><path d="M7 13Q6 20 13 24Q2 24 0 13Q4 7 11 9Q8 10 7 13Z" fill="#1581ce" /></svg>
        <svg v-else-if="a === 'rar'" width="26" height="24"><path d="M2 2L20 1L24 5L5 7Z" fill="#8b4b77" /><path d="M2 3H21L25 7V9H5Z" fill="#702d5c" /><rect x="3" y="8" width="21" height="5" fill="#2635a3" /><rect x="3" y="14" width="21" height="6" fill="#28722b" /><path d="M1 3L5 7V21L1 18Z" fill="#222" /><path d="M2 8L5 10M2 13L5 15M2 17L5 19M5 13.500H24M5 20.500H24M5 8H24" stroke="#ddd" stroke-width="1.200" /><rect x="13" y="3" width="4" height="18" fill="#927143" /><rect x="12.500" y="10" width="5" height="5" fill="#d4bf76" stroke="#333" /></svg>
        <svg v-else width="24" height="24"><use href="#td" /></svg>
      </div>
      <div class="weather"><svg width="24" height="24"><path d="M1 12Q3 4 13 4Q21 6 22 14L16 12L11 13L6 12Z" fill="#45aee9" /><path d="M10 12V20Q9 24 6 21" fill="none" stroke="#777" stroke-width="2" /><path d="M15 2L14 4M19 1L18 3M23 2L22 4M21 7L20 9M24 9L23 11" stroke="#3ba4e6" stroke-width="1.500" /></svg><span v-fit="35">Llov...</span></div>
      <svg class="tray" width="100" height="24" fill="none" stroke="#111" stroke-width="1.400">
        <path d="M6 15L12 9L18 15" /><path d="M32 18A13 13 0 0 1 43 8M34.500 18A9.500 9.500 0 0 1 43 11.500M37 18A7 7 0 0 1 43 14" stroke="#555" /><circle cx="41.500" cy="17" r="1.800" fill="#111" stroke="none" /><path d="M52 10H54L58 7V17L54 14H52ZM60.500 9Q62 12 60.500 15" /><path d="M63 8Q65.500 12 63 16M65.500 6.500Q69 12 65.500 17.500" stroke="#999" /><rect x="77.700" y="8" width="12" height="8" rx="1" /><rect x="80" y="10" width="7" height="4" fill="#111" stroke="none" /><path d="M91 10.500V14" />
      </svg>
      <div class="clock"><span v-fit="57">07:36 p. m.</span><span v-fit="58">31/07/2025</span></div>
      <svg class="note" width="26" height="28"><path d="M1 1H17V14H6L3 17V14H1Z" fill="#111" /><path d="M4 5H14M4 8H14M4 11H10" stroke="#ddd" /><circle cx="16" cy="17" r="8" fill="#bdb8b9" stroke="#8c8889" /><text x="16" y="21.500" class="four">4</text></svg>
      <i class="peek"></i>
    </div>
  </div>
</template>

<style>
body { margin: 0; background: #000; overflow: hidden; }
</style>

<style scoped>
* { box-sizing: border-box; }
svg { display: block; flex: none; }
span { white-space: nowrap; }
.defs { position: absolute; }
.screen { width: 1366px; height: 768px; overflow: hidden; font-family: "DejaVu Sans", sans-serif; font-size: 12px; color: #98a3ba; background: #000; }
.desk { display: flex; height: 728px; background: linear-gradient(#000 0 40px, #1b1b1b 40px); }
.backdrop { width: 8px; margin-top: 40px; height: 688px; background: linear-gradient(#2b2b2b 0 46px, #4b4b4b 46px 47px, #191919 47px); border-top-left-radius: 7px; }
.backdrop.right { border-radius: 0 7px 0 0; }
.window { width: 1350px; padding-top: 1px; display: flex; flex-direction: column; height: 720px; }
.title { height: 30px; flex: none; background: #fff; display: flex; align-items: center; padding-left: 8px; color: #000; font-family: "Open Sans", "Noto Sans", sans-serif; font-size: 12px; }
.caption { margin-left: 5px; line-height: 16px; }
.wbtns { margin-left: auto; margin-right: 0; }
.bar { height: 24px; flex: none; background: #2f3034; border: 1px solid #66676c; border-bottom: 0; border-left-color: #55565b; display: flex; align-items: center; overflow: hidden; }
.row1 { padding-left: 10px; }
.menu { flex: none; }
.box { flex: none; border: 1px solid #66676c; background: #363942; display: flex; align-items: center; justify-content: center; overflow: hidden; }
.row1 .box { height: 19px; margin-right: 2px; }
.link { width: 100px; }
.row1 .oi { width: 30px; background: #c38548; color: #4a0c05; box-shadow: inset 0 0 0 1px #2f3034; }
.sixty { width: 30px; color: #5c6270; }
.row1 .fps { width: 86px; justify-content: flex-start; padding-left: 3px; gap: 9px; background: #393a3d; }
.check { display: flex; align-items: center; gap: 6px; width: 82px; padding-left: 3px; }
.row1 .msg { width: 522px; justify-content: flex-start; padding-left: 3px; background: #393a3d; }
.last { width: 100px; }
.row2 { padding-left: 2px; }
.sq { width: 20px; height: 18px; margin-right: 2px; }
.sep { width: 2px; height: 13px; background: #5b5c61; }
.s1 { margin-left: 9px; } .pane { margin-left: 14px; width: 79px; } .lay { margin-right: 2px; }
.s2 { margin-left: 9px; } .newl { margin-left: 14px; width: 77px; }
.row3 { background: #363942; height: 25px; border-bottom: 1px solid #66676c; padding-left: 1px; }
.tool { width: 21px; height: 21px; margin-right: 2px; }
.path { margin-left: 2px; margin-right: auto; }
.row3 .tool:last-child { margin-right: 1px; }
.big { font: bold 68px "DejaVu Sans", sans-serif; fill: #bfbfbf; }
.mono { font: 12px "DejaVu Sans Mono", monospace; fill: #cbcbcb; }
.micro { font: 5.500px "DejaVu Sans Mono", monospace; fill: #111; }
.micro.ex { font-size: 6.500px; }
.timeline { display: flex; height: 70px; flex: none; border: 1px solid #66676c; }
.params { width: 278px; flex: none; background: #0b0a14; border-right: 1px solid #66676c; padding: 4px 0 0 5px; font-size: 12.500px; }
.prow { display: flex; height: 15.200px; line-height: 15px; color: #70757f; }
.prow > * { flex: none; }
.prow label { width: 61px; } .prow b { width: 69px; font-weight: normal; color: #7fa4f0; }
.prow .l2 { width: 60px; } .prow .b2 { width: 35px; } .prow .b3 { width: 20px; }
.transport { flex: 1; min-width: 0; background: #303133; display: flex; flex-direction: column; }
.ruler { height: 14px; flex: none; background: #0c0c0c; border-bottom: 1px solid #66676c; display: flex; font-size: 11px; line-height: 12px; color: #777; }
.tick { width: 89.400px; padding-left: 1px; border-left: 1px solid #707070; flex: none; }
.tick:first-child { border-left-color: transparent; padding-left: 0; margin-left: -1px; width: 88px; }
.tick.now { background: linear-gradient(#54668b, #54668b) 4px 0 / 2px 13px no-repeat; }
.end { margin-left: -24px; }
.range { height: 12px; flex: none; border-bottom: 1px solid #66676c; background: #171717; padding: 1px; display: flex; gap: 1px; }
.range i { width: 21px; background: #3e3e3e; border: 1px solid #666; font-style: normal; font-size: 8px; line-height: 4px; text-align: center; color: #999; }
.fill { width: 1021px; background: #364769; }
.controls { flex: 1; display: flex; padding: 1px 0 0 3px; gap: 2px; }
.slashes { width: 20px; margin-right: 1px; }
.slashes div { height: 19px; border: 1px solid #66676c; text-align: center; line-height: 18px; color: #626875; background: #363942; }
.modes { width: 68px; display: flex; flex-direction: column; gap: 2px; }
.mode { height: 18px; border: 1px solid #66676c; background: #363942; box-shadow: inset 0 0 0 1px #2b2c30; display: flex; align-items: center; justify-content: center; }
.mode.on { background: #c38548; color: #4a0c05; }
.lcd { width: 135px; height: 39px; background: #000; border: 1px solid #66676c; color: #7fa4f0; font-size: 25px; display: flex; align-items: center; justify-content: center; padding-top: 5px; padding-left: 1px; }
.wide { width: 200px; }
.tb { width: 39px; height: 39px; background: #363942; border: 1px solid #66676c; display: flex; align-items: center; justify-content: center; font-size: 16px; }
.tb.on { background: #c38548; }
.limit { padding-left: 1px; line-height: 18px; } .limit > span { margin-left: 2px; }
.lrow { display: flex; gap: 1px; margin-top: 3px; } .loop { width: 52px; } .once { width: 45px; }
.taskbar { height: 40px; display: flex; align-items: center; background: linear-gradient(90deg, #e8d4d8, #ebdedb 27%, #f0e7da 46%, #f0e6da 59%, #e8d6d8 69%, #e7d5d5); color: #111; font-family: "Open Sans", "Noto Sans", sans-serif; font-size: 12px; }
.start { width: 48px; padding-left: 16px; flex: none; }
.search { width: 288px; flex: none; height: 40px; background: #fff; border: 1px solid #bfc5c7; display: flex; align-items: center; padding-left: 11px; font-size: 14px; }
.search span { margin-left: 10px; }
.stars { margin-left: auto; margin-right: 9px; }
.taskview { width: 50px; flex: none; padding-left: 16px; }
.app { width: 49px; height: 40px; display: flex; align-items: center; justify-content: center; flex: none; position: relative; }
.run::after { content: ""; position: absolute; left: 4px; right: 5px; bottom: 0; height: 2px; background: #cc2430; }
.td { width: 48px; margin-left: 1px; background: #f5eeef; } .td::after { left: 0; right: 0; }
.adobe { font: bold 12px "Open Sans", sans-serif; text-anchor: middle; } .adobe.xl { font-size: 13.500px; }
.ms { font: bold 11px "Open Sans", sans-serif; fill: #fff; text-anchor: middle; } .ms.w { font-size: 9px; }
.badge { font: 11px "Open Sans", sans-serif; fill: #fff; text-anchor: middle; }
.weather { display: flex; align-items: center; gap: 8px; margin-left: 37px; width: 87px; font-size: 14px; flex: none; }
.tray { flex: none; }
.clock { width: 58px; margin-left: 2px; display: flex; flex-direction: column; line-height: 18px; align-items: flex-start; flex: none; }
.note { margin-left: 17px; }
.peek { width: 1px; height: 40px; background: #bfb0b1; margin-left: 9px; }
.four { font: 12px "Open Sans", sans-serif; text-anchor: middle; }
</style>
